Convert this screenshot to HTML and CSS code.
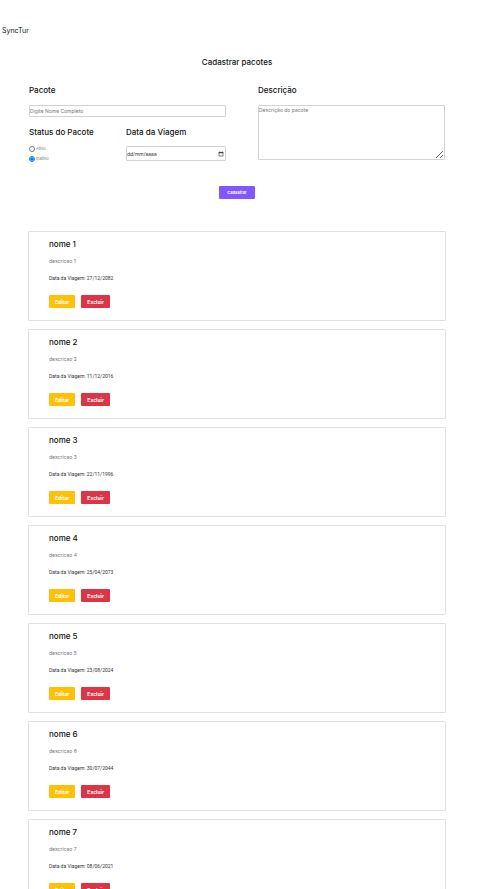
FILE: index.html
```html
<!DOCTYPE html>
<html lang="pt-BR">
<head>
<meta charset="utf-8">
<meta name="viewport" content="width=device-width, initial-scale=1">
<title>SyncTur</title>
<link rel="stylesheet" href="styles.css">
</head>
<body>
<header class="brand">SyncTur</header>
<main class="page">
  <h1 class="heading title">Cadastrar pacotes</h1>
  <form class="form">
    <div class="fields">
      <div class="column">
        <label class="heading" for="pacote">Pacote</label>
        <input class="control name" id="pacote" type="text" placeholder="Digite Nome Completo">
        <div class="row">
          <fieldset class="status">
            <legend class="heading">Status do Pacote</legend>
            <label class="option"><input type="radio" name="status"><span>Ativo</span></label>
            <label class="option"><input type="radio" name="status" checked><span>Inativo</span></label>
          </fieldset>
          <div class="date">
            <label class="heading" for="data">Data da Viagem</label>
            <div class="control date-box">
              <input id="data" type="text" placeholder="dd/mm/aaaa">
              <button class="picker" type="button" aria-label="Abrir calendário">
                <svg viewBox="0 0 6 6" width="6" height="6"><path d="M1 1.5h4v3.6H1zM1.7.3v1M4.3.3v1" fill="none" stroke="#333" stroke-width=".6"/><path d="M.7 1.2h4.6v1H.7z" fill="#333"/></svg>
              </button>
            </div>
          </div>
        </div>
      </div>
      <div class="column">
        <label class="heading" for="descricao">Descrição</label>
        <textarea class="control description" id="descricao" placeholder="Descrição do pacote"></textarea>
      </div>
    </div>
    <button class="button submit" type="submit">Cadastrar</button>
  </form>
  <section class="list">
    <article class="card">
      <h2 class="heading">nome 1</h2>
      <p class="summary">descricao 1</p>
      <p class="travel">Data da Viagem: 27/12/2082</p>
      <div class="actions"><button class="button edit" type="button">Editar</button><button class="button remove" type="button">Excluir</button></div>
    </article>
    <article class="card">
      <h2 class="heading">nome 2</h2>
      <p class="summary">descricao 2</p>
      <p class="travel">Data da Viagem: 11/12/2016</p>
      <div class="actions"><button class="button edit" type="button">Editar</button><button class="button remove" type="button">Excluir</button></div>
    </article>
    <article class="card">
      <h2 class="heading">nome 3</h2>
      <p class="summary">descricao 3</p>
      <p class="travel">Data da Viagem: 22/11/1996</p>
      <div class="actions"><button class="button edit" type="button">Editar</button><button class="button remove" type="button">Excluir</button></div>
    </article>
    <article class="card">
      <h2 class="heading">nome 4</h2>
      <p class="summary">descricao 4</p>
      <p class="travel">Data da Viagem: 25/04/2073</p>
      <div class="actions"><button class="button edit" type="button">Editar</button><button class="button remove" type="button">Excluir</button></div>
    </article>
    <article class="card">
      <h2 class="heading">nome 5</h2>
      <p class="summary">descricao 5</p>
      <p class="travel">Data da Viagem: 23/08/2024</p>
      <div class="actions"><button class="button edit" type="button">Editar</button><button class="button remove" type="button">Excluir</button></div>
    </article>
    <article class="card">
      <h2 class="heading">nome 6</h2>
      <p class="summary">descricao 6</p>
      <p class="travel">Data da Viagem: 30/07/2044</p>
      <div class="actions"><button class="button edit" type="button">Editar</button><button class="button remove" type="button">Excluir</button></div>
    </article>
    <article class="card">
      <h2 class="heading">nome 7</h2>
      <p class="summary">descricao 7</p>
      <p class="travel">Data da Viagem: 08/06/2021</p>
      <div class="actions"><button class="button edit" type="button">Editar</button><button class="button remove" type="button">Excluir</button></div>
    </article>
  </section>
</main>
</body>
</html>
```
FILE: styles.css
```css
* {
  box-sizing: border-box;
  margin: 0;
  padding: 0;
}

body {
  background: #fff;
  color: #111;
  font-family: Inter, "Liberation Sans", sans-serif;
  font-size: 5px;
  line-height: 8px;
}

input,
textarea,
button {
  font: inherit;
}

.brand {
  padding: 26px 2px 0;
  font-size: 7px;
  line-height: 10px;
}

.page {
  padding: 20px 35px 0 28px;
}

.heading {
  display: block;
  font-size: 8px;
  font-weight: 500;
  line-height: 12px;
}

.title {
  text-align: center;
}

.form {
  padding: 16px 1px 0;
}

.fields {
  display: grid;
  grid-template-columns: 197fr 187fr;
  gap: 32px;
}

.column {
  display: flex;
  flex-direction: column;
  min-width: 0;
}

.control {
  width: 100%;
  border: 1px solid #ced4da;
  border-radius: 1px;
  background: #fff;
}

::placeholder {
  color: #757575;
  opacity: 1;
}

.name {
  height: 12px;
  margin-top: 9px;
}

.row {
  display: grid;
  grid-template-columns: 97fr 100fr;
  margin-top: 9px;
}

.status {
  border: 0;
  min-width: 0;
}

.option {
  display: flex;
  align-items: center;
  gap: 1px;
  height: 10px;
  color: #777;
  font-size: 4px;
}

.status .heading {
  margin-bottom: 6px;
}

.option input {
  width: 6px;
  height: 6px;
}

.date-box {
  display: flex;
  align-items: center;
  height: 15px;
  margin-top: 8px;
  padding-right: 1px;
}

.date-box input {
  flex: 1;
  min-width: 0;
  border: 0;
  background: none;
}

.date-box ::placeholder {
  color: #333;
}

.picker {
  display: flex;
  border: 0;
  background: none;
}

.description {
  height: 55px;
  margin-top: 9px;
  resize: vertical;
}

.button {
  display: block;
  height: 13px;
  padding: 0 6px;
  border: 0;
  border-radius: 1px;
  color: #fff;
  font-size: 5px;
  font-weight: 700;
}

.submit {
  margin: 22px auto 0;
  padding: 0 8px;
  background: #8257ff;
  font-size: 4px;
}

.list {
  display: grid;
  gap: 8px;
  margin-top: 32px;
}

.card {
  padding: 6px 20px 12px;
  border: 1px solid #dee2e6;
  border-radius: 1px;
}

.summary {
  margin-top: 7px;
  color: #6c757d;
}

.travel {
  margin-top: 9px;
  color: #333;
  font-family: Roboto, Inter, sans-serif;
}

.actions {
  display: flex;
  gap: 6px;
  margin-top: 13px;
}

.edit {
  background: #ffc107;
}

.remove {
  background: #dc3545;
}
```
